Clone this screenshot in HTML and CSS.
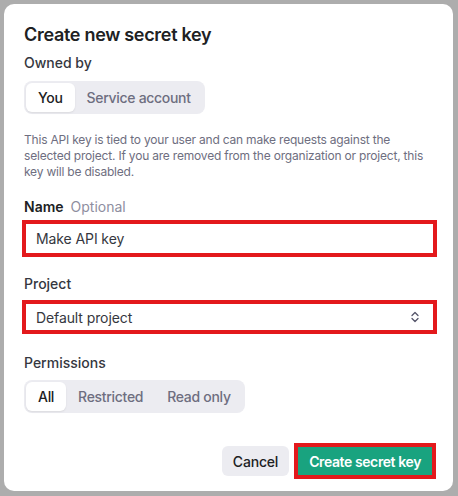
FILE: index.html
```html
<!DOCTYPE html>
<html lang="en">
<head>
<meta charset="utf-8">
<title>Create new secret key</title>
<link rel="stylesheet" href="styles.css">
</head>
<body>
<div class="modal">
  <h1 class="title">Create new secret key</h1>
  <div class="label">Owned by</div>
  <div class="segmented seg-owner">
    <span class="seg-item active">You</span>
    <span class="seg-item">Service account</span>
  </div>
  <p class="desc">This API key is tied to your user and can make requests against the<br>selected project. If you are removed from the organization or project, this<br>key will be disabled.</p>
  <div class="label label-name"><span class="strong">Name</span><span class="optional">Optional</span></div>
  <div class="field field-input">Make API key</div>
  <div class="label label-project">Project</div>
  <div class="field field-select">
    <span>Default project</span>
    <svg class="chevron" width="10" height="14" viewBox="0 0 10 14" fill="none" stroke="#55556a" stroke-width="1.3" stroke-linecap="round" stroke-linejoin="round"><path d="M2 5.5 L5 2.5 L8 5.5"/><path d="M2 8.5 L5 11.5 L8 8.5"/></svg>
  </div>
  <div class="label label-perm">Permissions</div>
  <div class="segmented seg-perm">
    <span class="seg-item active">All</span>
    <span class="seg-item">Restricted</span>
    <span class="seg-item">Read only</span>
  </div>
  <div class="footer">
    <button class="btn btn-cancel">Cancel</button>
    <button class="btn btn-create">Create secret key</button>
  </div>
</div>
</body>
</html>
```
FILE: styles.css
```css
* { box-sizing: border-box; }
html, body {
  margin: 0;
  padding: 0;
}
body {
  width: 458px;
  height: 496px;
  background: #adadad;
  font-family: Inter, "Noto Sans", "Liberation Sans", sans-serif;
  color: #202123;
  overflow: hidden;
}
.modal {
  margin: 4px 0 0 4px;
  width: 449px;
  height: 487px;
  background: #ffffff;
  border-radius: 10px;
  padding: 19px 18px 0 20px;
  display: flex;
  flex-direction: column;
  align-items: flex-start;
}
.title {
  margin: 0;
  font-size: 18px;
  line-height: 24px;
  font-weight: 600;
  letter-spacing: -0.3px;
  color: #202123;
}
.label {
  font-size: 14px;
  line-height: 20px;
  font-weight: 500;
  color: #353740;
  margin-top: 6px;
}
.segmented {
  margin-top: 8px;
  display: flex;
  background: #ececf1;
  border-radius: 8px;
  padding: 2px;
  height: 33px;
}
.seg-item {
  display: flex;
  align-items: center;
  padding: 0 12px;
  font-size: 14px;
  font-weight: 500;
  color: #6e6e80;
  border-radius: 6px;
  letter-spacing: -0.3px;
}
.seg-item.active {
  background: #ffffff;
  color: #202123;
  box-shadow: 0 1px 2px rgba(0,0,0,0.08);
}
.desc {
  margin: 18px 0 0;
  font-size: 12px;
  line-height: 16px;
  color: #6e6e80;
  letter-spacing: -0.2px;
}
.label-name { margin-top: 17px; display: flex; gap: 7px; }
.strong { font-weight: 600; color: #202123; }
.optional { font-weight: 400; color: #8e8ea0; }
.field {
  margin-left: -2px;
  width: calc(100% + 4px);
  border: 4px solid #e3191c;
  background: #fff;
  font-size: 14px;
  color: #353740;
  display: flex;
  align-items: center;
  padding: 0 10px;
  letter-spacing: -0.1px;
}
.field-input { margin-top: 3px; height: 37px; }
.label-project { margin-top: 17px; }
.field-select {
  margin-top: 6px;
  height: 34px;
  justify-content: space-between;
  padding-right: 13px;
}
.chevron { display: block; }
.label-perm { margin-top: 19px; }
.seg-perm { margin-top: 7px; }
.footer {
  margin-top: 30px;
  align-self: stretch;
  display: flex;
  justify-content: flex-end;
  align-items: center;
  gap: 5px;
  margin-right: -1px;
}
.btn {
  font-family: inherit;
  font-size: 14px;
  border: none;
  cursor: pointer;
  display: flex;
  align-items: center;
}
.btn-cancel {
  height: 30px;
  padding: 0 11px;
  background: #ececf1;
  color: #202123;
  border-radius: 6px;
  font-weight: 500;
  letter-spacing: -0.2px;
}
.btn-create {
  height: 36px;
  padding: 0 11px;
  background: #19a37f;
  color: #ffffff;
  font-weight: 600;
  border: 4px solid #e3191c;
  letter-spacing: -0.4px;
}
```
